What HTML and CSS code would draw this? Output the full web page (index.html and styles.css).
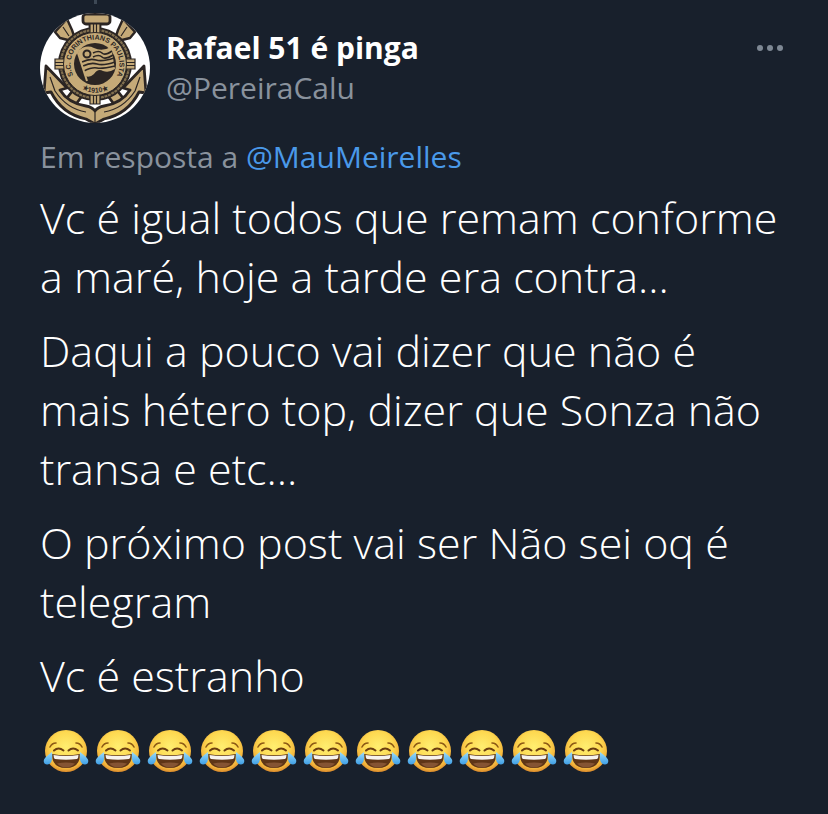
FILE: index.html
```
<!DOCTYPE html>
<html lang="pt-BR">
<head>
  <meta charset="UTF-8">
  <meta name="viewport" content="width=device-width, initial-scale=1.0">
  <title>Rafael 51 é pinga</title>
  <link rel="stylesheet" href="styles.css">
</head>
<body>
  <svg class="sprite" aria-hidden="true">
    <defs>
      <radialGradient id="face" cx="50%" cy="40%" r="60%">
        <stop offset="0" stop-color="#ffee70"/>
        <stop offset="0.6" stop-color="#fdd850"/>
        <stop offset="0.86" stop-color="#f3b43c"/>
        <stop offset="1" stop-color="#d98a2c"/>
      </radialGradient>
      <linearGradient id="tear" x1="0" y1="0" x2="0" y2="1">
        <stop offset="0" stop-color="#9bdcfb"/>
        <stop offset="1" stop-color="#3f9fe6"/>
      </linearGradient>
    </defs>
    <symbol id="joy" viewBox="0 0 46 44">
      <circle cx="23" cy="22" r="21" fill="url(#face)"/>
      <path d="M7 18q2-4 6-4M39 18q-2-4-6-4" fill="none" stroke="#8d5a16" stroke-width="1.600" stroke-linecap="round"/>
      <path d="M11 21.500q4.500-4 9.500 0M25.500 21.500q4.500-4 9.500 0" fill="none" stroke="#6b3d10" stroke-width="2" stroke-linecap="round"/>
      <path d="M9 25q14 2.500 28 0q0 14-14 14t-14-14z" fill="#5e3517"/>
      <path d="M10.500 26q12.500 2 25 0q0 3-1.500 4q-11 1.500-22 0q-1.500-1-1.500-4z" fill="#f7f3ee"/>
      <path d="M14 34.500q9-2 18 0q-4 4-9 4t-9-4z" fill="#855433"/>
      <path d="M9 23q1 9-2 11.500q-3 2-5.500 0q-2-3 1-6q3-3 6.500-5.500z" fill="url(#tear)"/>
      <path d="M37 23q-1 9 2 11.500q3 2 5.500 0q2-3-1-6q-3-3-6.500-5.500z" fill="url(#tear)"/>
    </symbol>
  </svg>

  <article class="tweet">
    <header class="tweet-header">
      <a class="avatar" href="#" aria-label="Rafael 51 é pinga">
        <svg viewBox="0 0 110 110">
          <defs>
            <clipPath id="round"><circle cx="55" cy="55" r="55"/></clipPath>
            <path id="ring-top" d="M36 66.500A24.500 24.500 0 1 1 74 66.500"/>
            <path id="ring-bottom" d="M38 74A28.600 28.600 0 0 0 72 74"/>
          </defs>
          <g clip-path="url(#round)">
            <rect width="110" height="110" fill="#fff"/>
            <!-- oars -->
            <g fill="#c5aa78" stroke="#2b2523" stroke-width="2.400" stroke-linejoin="round">
              <path d="M15 19L27 6L32 17L34 23L41 33L36 37L28 27L20 25z"/>
              <path d="M95 19L83 6L78 17L76 23L69 33L74 37L82 27L90 25z"/>
              <path d="M23 14l6 9M87 14l-6 9" fill="none" stroke-width="1.200"/>
            </g>
            <!-- anchor -->
            <g fill="#c5aa78" stroke="#2b2523" stroke-width="2.800" stroke-linejoin="round">
              <path d="M50 9h10v14h-10z"/>
              <rect x="43" y="1" width="27" height="10" rx="3"/>
              <path d="M23 90L34 76L42 83L34 94zM87 90L76 76L68 83L76 94z"/>
              <path d="M6 53L27 75L20 77Q28 90 46 93Q52 94 55 98Q58 94 64 93Q82 90 90 77L83 75L104 53L106 80L99 79Q88 101 64 106L55 111L46 106Q22 101 11 79L4 80z"/>
              <path d="M10 64l5 14Q27 96 46 99M100 64l-5 14Q83 96 64 99M55 98v12" fill="none" stroke-width="1.200"/>
            </g>
            <!-- lifebuoy -->
            <circle cx="55" cy="51" r="37" fill="#2b2523"/>
            <circle cx="55" cy="51" r="34" fill="none" stroke="#82704f" stroke-width="2.200" stroke-dasharray="3 0.700"/>
            <g fill="#c5aa78" stroke="#2b2523" stroke-width="1.200">
              <path d="M50 11h10v11h-10zM50 80h10v11h-10zM15 46h11v10h-11zM84 46h11v10h-11z"/>
              <path d="M53.500 11v11M56.500 11v11M53.500 80v11M56.500 80v11M15 49.500h11M15 52.500h11M84 49.500h11M84 52.500h11"/>
            </g>
            <circle cx="55" cy="51" r="31.500" fill="#c5aa78" stroke="#2b2523"/>
            <circle cx="55" cy="51" r="21" fill="#2b2523"/>
            <!-- flag -->
            <path d="M38 38Q46 31 54 35Q62 39 71 34L75 56Q69 60 63 58Q58 55 54 61Q50 65 45 63z" fill="#c5aa78"/>
            <path d="M53 40q6-3 9 0t10-2M53 44q6-3 9 0t11-2M42 49q8-4 14-2t18-2M43 53q8-4 14-2t18-2M44 58q8-4 13-3t18-2" fill="none" stroke="#2b2523" stroke-width="1.600"/>
            <path d="M37 37l10 31" stroke="#c5aa78" stroke-width="2"/>
            <circle cx="47" cy="41" r="3.500" fill="#c5aa78" stroke="#2b2523" stroke-width="2"/>
            <text class="crest-text"><textPath href="#ring-top" startOffset="50%" text-anchor="middle">S.C. CORINTHIANS PAULISTA</textPath></text>
            <text class="crest-text"><textPath href="#ring-bottom" startOffset="50%" text-anchor="middle">★1910★</textPath></text>
          </g>
        </svg>
      </a>
      <div class="author">
        <a class="name" href="#">Rafael 51 é pinga</a>
        <a class="handle" href="#">@PereiraCalu</a>
      </div>
      <button class="more" type="button" aria-label="Mais">
        <svg viewBox="0 0 28 8"><circle cx="4" cy="4" r="3"/><circle cx="14" cy="4" r="3"/><circle cx="24" cy="4" r="3"/></svg>
      </button>
    </header>

    <p class="reply-to">Em resposta a <a href="#">@MauMeirelles</a></p>

    <div class="tweet-text">
      <p>Vc é igual todos que remam conforme a maré, hoje a tarde era contra...</p>
      <p>Daqui a pouco vai dizer que não é mais hétero top, dizer que Sonza não transa e etc...</p>
      <p>O próximo post vai ser Não sei oq é telegram</p>
      <p>Vc é estranho</p>
    </div>

    <div class="emojis" role="img" aria-label="Rosto chorando de rir">
      <svg><use href="#joy"/></svg>
      <svg><use href="#joy"/></svg>
      <svg><use href="#joy"/></svg>
      <svg><use href="#joy"/></svg>
      <svg><use href="#joy"/></svg>
      <svg><use href="#joy"/></svg>
      <svg><use href="#joy"/></svg>
      <svg><use href="#joy"/></svg>
      <svg><use href="#joy"/></svg>
      <svg><use href="#joy"/></svg>
      <svg><use href="#joy"/></svg>
    </div>
  </article>
</body>
</html>
```
FILE: styles.css
```
body {
  margin: 0;
  background: #18202c;
  color: #fff;
  font-family: "Open Sans", "Noto Sans", sans-serif;
}

a {
  color: inherit;
  text-decoration: none;
}

p {
  margin: 0;
}

.sprite {
  position: absolute;
  width: 0;
  height: 0;
}

.tweet {
  position: relative;
  padding: 13px 40px 40px;
}

/* thread line coming from the tweet above */
.tweet::before {
  content: "";
  position: absolute;
  top: 0;
  left: 94px;
  width: 3px;
  height: 4px;
  background: #3d4855;
}

.tweet-header {
  display: flex;
  align-items: flex-start;
  gap: 16px;
}

.avatar,
.avatar svg {
  display: block;
  width: 110px;
  height: 110px;
}

.crest-text {
  fill: #2b2523;
  font-family: "Liberation Sans", sans-serif;
  font-size: 7px;
  font-weight: bold;
}

.author {
  flex: 1;
  display: flex;
  flex-direction: column;
  padding-top: 15px;
  line-height: 40px;
}

.name {
  font-size: 30px;
  font-weight: 700;
}

.handle {
  color: #89929d;
  font-size: 30px;
}

.more {
  padding: 31px 4px;
  border: 0;
  background: none;
  cursor: pointer;
}

.more svg {
  display: block;
  width: 28px;
  height: 8px;
  fill: #7e8894;
}

.reply-to {
  margin-top: 14px;
  color: #89929d;
  font-size: 30px;
  line-height: 40px;
}

.reply-to a {
  color: #4a99e9;
}

.tweet-text {
  display: flex;
  flex-direction: column;
  gap: 15px;
  margin-top: 11px;
  font-size: 43px;
  font-weight: 340;
  line-height: 59px;
}

.emojis {
  display: flex;
  flex-wrap: wrap;
  gap: 6px;
  margin-top: 24px;
  padding-left: 3px;
}

.emojis svg {
  width: 46px;
  height: 44px;
}
```
